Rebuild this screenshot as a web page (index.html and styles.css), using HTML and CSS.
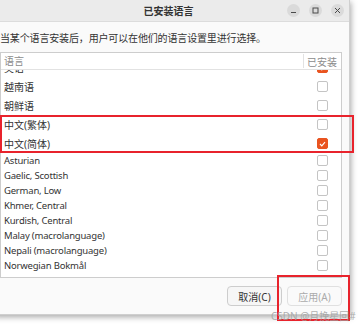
FILE: index.html
```html
<!DOCTYPE html>
<html lang="zh-CN">
<head>
    <meta charset="UTF-8">
    <meta name="viewport" content="width=device-width, initial-scale=1.0">
    <title>已安装语言</title>
    <link rel="stylesheet" href="styles.css">
</head>
<body>

<div class="dialog">
    <!-- Title bar -->
    <div class="titlebar">
        <span></span>
        <span class="title">已安装语言</span>
        <div class="controls">
            <span class="ctl">
                <svg width="7" height="7" viewBox="0 0 7 7"><path d="M1 5.5h5" stroke="#4a4a4a" stroke-width="1"/></svg>
            </span>
            <span class="ctl">
                <svg width="7" height="7" viewBox="0 0 7 7"><rect x="1" y="1" width="5" height="5" fill="none" stroke="#4a4a4a" stroke-width="1"/></svg>
            </span>
            <span class="ctl">
                <svg width="7" height="7" viewBox="0 0 7 7"><path d="M1 1l5 5M6 1l-5 5" stroke="#4a4a4a" stroke-width="1"/></svg>
            </span>
        </div>
    </div>

    <!-- Content -->
    <div class="content">
        <p class="hint">当某个语言安装后，用户可以在他们的语言设置里进行选择。</p>

        <div class="list">
            <div class="list-head">
                <span class="col-name">语言</span>
                <span class="col-check">已安装</span>
            </div>
            <div class="list-body">
                <div class="rows">
                    <div class="row cjk"><span class="name">英语</span><span class="cell"><span class="check on"><svg width="7" height="6" viewBox="0 0 7 6"><path d="M1 3l1.8 1.8L6 1.2" fill="none" stroke="#fff" stroke-width="1.2"/></svg></span></span></div>
                    <div class="row cjk"><span class="name">越南语</span><span class="cell"><span class="check"></span></span></div>
                    <div class="row cjk"><span class="name">朝鲜语</span><span class="cell"><span class="check"></span></span></div>
                    <div class="row cjk"><span class="name">中文(繁体)</span><span class="cell"><span class="check"></span></span></div>
                    <div class="row cjk"><span class="name">中文(简体)</span><span class="cell"><span class="check on"><svg width="7" height="6" viewBox="0 0 7 6"><path d="M1 3l1.8 1.8L6 1.2" fill="none" stroke="#fff" stroke-width="1.2"/></svg></span></span></div>
                    <div class="row"><span class="name">Asturian</span><span class="cell"><span class="check"></span></span></div>
                    <div class="row"><span class="name">Gaelic, Scottish</span><span class="cell"><span class="check"></span></span></div>
                    <div class="row"><span class="name">German, Low</span><span class="cell"><span class="check"></span></span></div>
                    <div class="row"><span class="name">Khmer, Central</span><span class="cell"><span class="check"></span></span></div>
                    <div class="row"><span class="name">Kurdish, Central</span><span class="cell"><span class="check"></span></span></div>
                    <div class="row"><span class="name">Malay (macrolanguage)</span><span class="cell"><span class="check"></span></span></div>
                    <div class="row"><span class="name">Nepali (macrolanguage)</span><span class="cell"><span class="check"></span></span></div>
                    <div class="row"><span class="name">Norwegian Bokmål</span><span class="cell"><span class="check"></span></span></div>
                    <div class="row"><span class="name">Norwegian Nynorsk</span><span class="cell"><span class="check"></span></span></div>
                </div>
            </div>
        </div>

        <div class="actions">
            <button class="btn">取消(C)</button>
            <button class="btn" disabled>应用(A)</button>
        </div>
    </div>
</div>

<!-- Annotation marks -->
<div class="mark mark-rows"></div>
<div class="mark mark-apply"></div>
<div class="watermark">CSDN @月挽星回#</div>

</body>
</html>
```

FILE: styles.css
```css
/* Reset */
* {
    margin: 0;
    padding: 0;
    box-sizing: border-box;
}

body {
    width: 359px;
    height: 326px;
    overflow: hidden;
    background-color: #ffffff;
    font-family: 'Noto Sans', 'Noto Sans CJK SC', sans-serif;
    font-size: 10px;
    color: #3c3c3c;
    position: relative;
}

/* Dialog window */
.dialog {
    margin-left: -7px;
    width: 357px;
    background-color: #fafafa;
    border-right: 1px solid #cfcfcf;
    border-bottom: 1px solid #cfcfcf;
    box-shadow: 1px 2px 6px rgba(0, 0, 0, 0.35);
}

/* Title bar */
.titlebar {
    height: 22px;
    display: grid;
    grid-template-columns: 1fr auto 1fr;
    align-items: center;
    background-color: #ebebeb;
    border-bottom: 1px solid #dcdcdc;
    padding-right: 5px;
}

.title {
    font-weight: bold;
    font-size: 10px;
    color: #333;
}

.controls {
    justify-self: end;
    display: flex;
    gap: 9px;
    margin-top: -1px;
}

.ctl {
    width: 13px;
    height: 13px;
    border-radius: 50%;
    background-color: #dadada;
    display: flex;
    align-items: center;
    justify-content: center;
}

/* Content */
.content {
    padding: 0 7px 8px 7px;
}

.hint {
    line-height: 14px;
    margin-top: 9px;
    margin-bottom: 7px;
    color: #333;
    white-space: nowrap;
    letter-spacing: -0.15px;
}

/* List */
.list {
    border: 1px solid #cdcdcd;
    background-color: #ffffff;
}

.list-head {
    display: flex;
    height: 17px;
    border-bottom: 1px solid #e2e2e2;
    color: #8c8c8c;
    line-height: 16px;
}

.col-name {
    flex: 1;
    padding-left: 3px;
}

.col-check {
    width: 38px;
    border-left: 1px solid #e2e2e2;
    padding-left: 3px;
    height: 14px;
    line-height: 16px;
    margin-top: 1px;
}

.list-body {
    height: 207px;
    overflow: hidden;
}

.rows {
    margin-top: -12px;
}

.row {
    display: flex;
    align-items: center;
    height: 15px;
    color: #333;
}

.row .name {
    font-size: 9.5px;
    letter-spacing: -0.2px;
}

.row.cjk {
    height: 19px;
}

.row.cjk .name {
    font-size: 10px;
    letter-spacing: 0;
}

.name {
    flex: 1;
    padding-left: 3px;
    white-space: nowrap;
}

.cell {
    width: 38px;
    display: flex;
    justify-content: center;
}

.check {
    width: 11px;
    height: 11px;
    border: 1px solid #c4c4c4;
    border-radius: 2px;
    background-color: #fff;
    display: flex;
    align-items: center;
    justify-content: center;
}

.check.on {
    background-color: #e95420;
    border-color: #e95420;
}

/* Buttons */
.actions {
    display: flex;
    justify-content: flex-end;
    gap: 5px;
    margin-top: 8px;
}

.btn {
    width: 55px;
    height: 20px;
    font-family: inherit;
    font-size: 10px;
    color: #333;
    background-color: #f6f6f6;
    border: 1px solid #cdcdcd;
    border-radius: 4px;
}

.btn:disabled {
    color: #ababab;
    background-color: #fafafa;
    border-color: #e0e0e0;
}

/* Red annotation boxes */
.mark {
    position: absolute;
    border: 2px solid #e8232c;
}

.mark-rows {
    left: 0;
    top: 115px;
    width: 354px;
    height: 38px;
}

.mark-apply {
    left: 277px;
    top: 275px;
    width: 73px;
    height: 46px;
}

.watermark {
    position: absolute;
    left: 271px;
    top: 308px;
    font-size: 10px;
    color: rgba(160, 160, 160, 0.85);
    white-space: nowrap;
}
```
